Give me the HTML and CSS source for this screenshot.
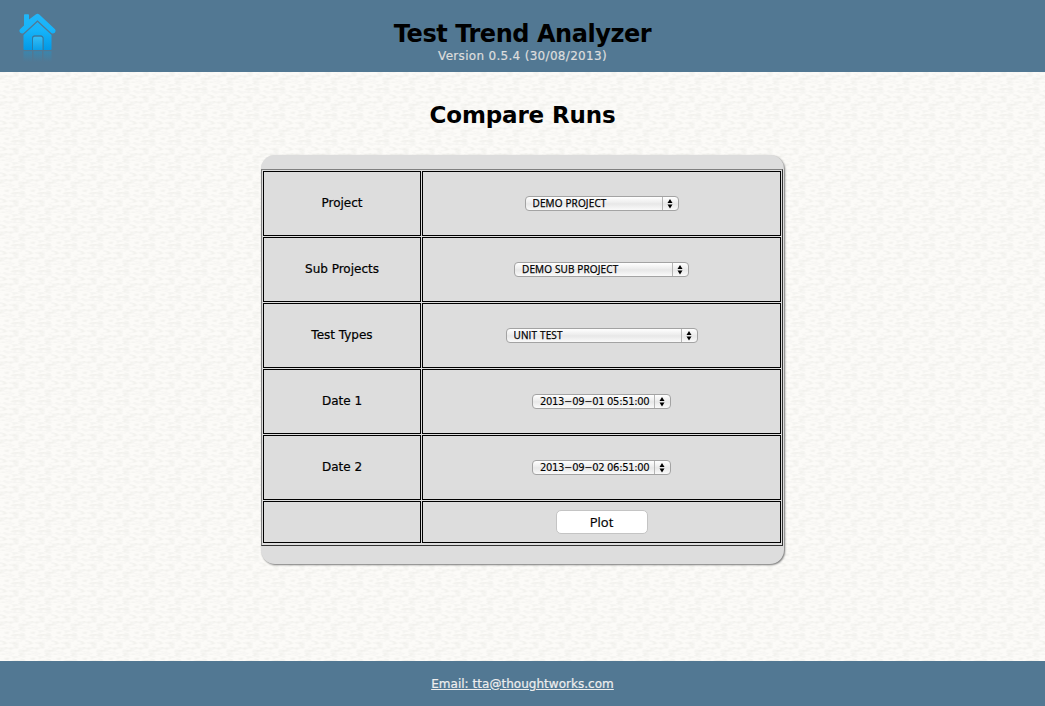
FILE: index.html
```html
<!DOCTYPE html>
<html lang="en">
<head>
<meta charset="utf-8">
<title>Test Trend Analyzer</title>
<link rel="stylesheet" href="styles.css">
</head>
<body>
<header class="header">
  <a class="home" href="#" aria-label="Home">
    <svg width="38" height="50" viewBox="0 0 38 50">
      <defs>
        <linearGradient id="blue" gradientUnits="userSpaceOnUse" x1="0" y1="2" x2="0" y2="38"><stop offset="0" stop-color="#22b6f8"/><stop offset=".45" stop-color="#16b4fa"/><stop offset="1" stop-color="#0299e6"/></linearGradient>
        <linearGradient id="door" x1="0" y1="0" x2="0" y2="1"><stop offset="0" stop-color="#35bdf5"/><stop offset="1" stop-color="#0a9fe8"/></linearGradient>
        <linearGradient id="fade" x1="0" y1="0" x2="0" y2="1"><stop offset="0" stop-color="#2c8fc0" stop-opacity=".6"/><stop offset="1" stop-color="#2c8fc0" stop-opacity="0"/></linearGradient>
      </defs>
      <path fill="url(#blue)" d="M5 3Q5 2.200 5.800 2.200H9.200Q10 2.200 10 3V7.500L16.700 2.400Q18.500 1.200 20.300 2.400L36 17.200Q37.200 18.800 35.800 20.800Q34 22.300 32.300 21L18.500 8.200L4.700 21Q3 22.300 1.200 20.800Q-.2 18.800 1 17.200L5 13.400Z"/>
      <path fill="url(#blue)" d="M18.500 10L32.500 23V37Q32.500 38 31.500 38H24.500V26Q24.500 23.500 22 23.500H15.500Q13 23.500 13 26V38H5.500Q4.500 38 4.500 37V23Z"/>
      <path fill="none" stroke="#2b7ba8" stroke-width="1" d="M13.500 38V26Q13.500 24 15.500 24H22Q24 24 24 26V38"/>
      <path fill="url(#door)" d="M14 38V26.500Q14 24.700 15.800 24.700H21.700Q23.500 24.700 23.500 26.500V38Z"/>
      <path fill="url(#fade)" d="M4.500 39.200H13V50H4.500ZM14.500 39.200H23V50H14.500ZM24.500 39.200H32.500V50H24.500Z"/>
    </svg>
  </a>
  <div class="brand">
    <h1 class="title">Test Trend Analyzer</h1>
    <div class="version">Version 0.5.4 (30/08/2013)</div>
  </div>
</header>
<main class="main">
  <h2 class="heading">Compare Runs</h2>
  <form class="card">
    <div class="grid">
      <div class="cell"><span class="label">Project</span></div>
      <div class="cell"><select class="select project"><option>DEMO PROJECT</option></select></div>
      <div class="cell"><span class="label">Sub Projects</span></div>
      <div class="cell"><select class="select sub"><option>DEMO SUB PROJECT</option></select></div>
      <div class="cell"><span class="label">Test Types</span></div>
      <div class="cell"><select class="select type"><option>UNIT TEST</option></select></div>
      <div class="cell"><span class="label">Date 1</span></div>
      <div class="cell"><select class="select date"><option>2013−09−01 05:51:00</option></select></div>
      <div class="cell"><span class="label">Date 2</span></div>
      <div class="cell"><select class="select date"><option>2013−09−02 06:51:00</option></select></div>
      <div class="cell"></div>
      <div class="cell"><button class="plot" type="button">Plot</button></div>
    </div>
  </form>
</main>
<footer class="footer"><a class="email" href="#">Email: tta@thoughtworks.com</a></footer>
</body>
</html>
```
FILE: styles.css
```css
* { box-sizing: border-box; }
body {
  margin: 0;
  height: 706px;
  display: flex;
  flex-direction: column;
  font-family: Verdana, "DejaVu Sans", sans-serif;
  font-size: 12px;
  color: #000;
  /* 26px paper-grain tile */
  background: #fcfbf8 url("data:image/svg+xml,%3Csvg xmlns='http://www.w3.org/2000/svg' width='26' height='26'%3E%3Cfilter id='n' x='0' y='0' width='26' height='26' filterUnits='userSpaceOnUse' color-interpolation-filters='sRGB'%3E%3CfeTurbulence type='fractalNoise' baseFrequency='.154 .385' numOctaves='2' seed='4' stitchTiles='stitch'/%3E%3CfeColorMatrix values='0 0 0 0 .8 0 0 0 0 .8 0 0 0 0 .78 .6 0 0 0 -.24'/%3E%3C/filter%3E%3Crect width='26' height='26' filter='url(%23n)'/%3E%3C/svg%3E");
}
.header {
  height: 72px;
  flex: none;
  display: grid;
  grid-template-columns: 60px 1fr 60px;
  background: #527893;
}
.home { padding: 12px 0 0 19px; }
.home svg { display: block; }
.brand { text-align: center; padding-top: 20px; }
.title { margin: 0; font-size: 24px; line-height: 29px; letter-spacing: -0.45px; white-space: nowrap; }
.version { font-size: 12px; line-height: 15px; letter-spacing: 0.31px; color: #ddd; -webkit-text-stroke: 0.2px; }
.main { flex: 1; display: flex; flex-direction: column; align-items: center; }
.heading { margin: 29px 0 25px; font-size: 23px; line-height: 29px; letter-spacing: -0.15px; }
.card {
  width: 523px;
  height: 409px;
  padding-top: 14px;
  border-radius: 14px;
  background: #ddd;
  box-shadow: 1px 1px 2px #777;
}
.grid {
  width: 522px;
  height: 377px;
  padding: 1px;
  display: grid;
  grid-template-columns: 158px 359px;
  grid-template-rows: repeat(5, 65px) 42px;
  gap: 1px;
  border: 1px solid;
  border-color: #808080 #333 #333 #808080;
}
.cell { border: 1px solid #000; display: flex; align-items: center; justify-content: center; }
.label { font-size: 12px; line-height: 16px; padding-bottom: 1px; -webkit-text-stroke: 0.2px; }
.select {
  appearance: none;
  height: 15px;
  margin: 0;
  padding: 0 0 0 7px;
  border: 1px solid #a3a3a3;
  border-radius: 4px;
  font-family: "Lucida Grande", "Open Sans", sans-serif;
  font-size: 10px;
  line-height: 13px;
  letter-spacing: 0.15px;
  -webkit-text-stroke: 0.25px;
  color: #000;
  background:
    url("data:image/svg+xml,%3Csvg xmlns='http://www.w3.org/2000/svg' width='16' height='13'%3E%3Cpath d='M.5 0V13' stroke='%23b5b5b5'/%3E%3Cpath d='M8 2L10.500 6H5.500ZM5.500 7.500H10.500L8 11.500Z'/%3E%3C/svg%3E") right center no-repeat,
    linear-gradient(#fff, #ebebeb 48%, #e7e7e7 52%, #fafafa);
}
.project { width: 154px; }
.sub { width: 175px; }
.type { width: 192px; }
.date { width: 139px; font-family: "Lucida Grande", "DejaVu Sans", sans-serif; letter-spacing: -0.34px; -webkit-text-stroke: 0.1px; }
.plot {
  width: 92px;
  height: 24px;
  padding: 0;
  border: 1px solid #c4c4c4;
  border-radius: 5px;
  background: #fff;
  color: #000;
  font-family: "Lucida Grande", "Open Sans", sans-serif;
  font-size: 13px;
  -webkit-text-stroke: 0.2px;
}
.footer {
  height: 45px;
  flex: none;
  display: flex;
  align-items: center;
  justify-content: center;
  background: #527893;
}
.email { font-size: 12px; letter-spacing: 0.03px; color: #eee; -webkit-text-stroke: 0.2px; }
```
